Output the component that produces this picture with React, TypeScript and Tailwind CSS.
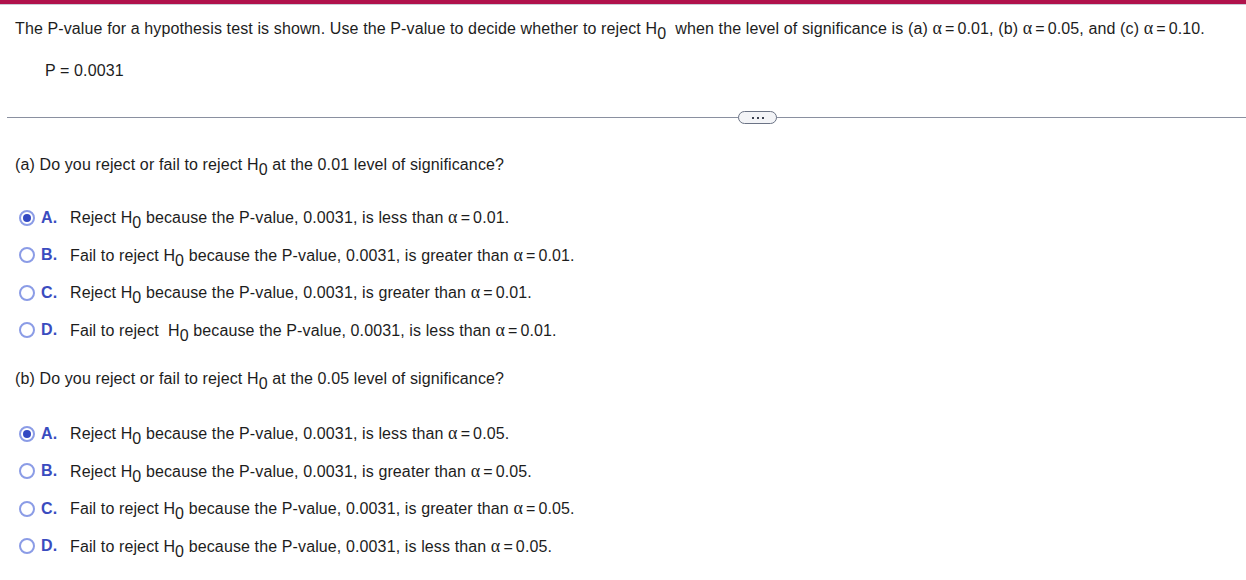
const H0 = () => (
  <span className="whitespace-nowrap">
    H<sub className="relative top-[5px] align-baseline text-[16px] leading-none">0</sub>
  </span>
);

const Alpha = ({ v }: { v: string }) => (
  <span className="whitespace-nowrap">
    <span className="font-['Liberation_Serif',serif] text-[18px]">α</span>
    <span className="mx-[3px]">=</span>
    {v}
  </span>
);

type Opt = { letter: string; before: string; after: React.ReactNode; selected?: boolean };

function Option({ letter, before, after, selected }: Opt) {
  return (
    <div className="flex h-[37.5px] items-center">
      <span className="ml-[19px] flex h-[16px] w-[16px] items-center justify-center rounded-full border-2 border-[#8b9ce6] bg-white">
        {selected && <span className="h-[8px] w-[8px] rounded-full bg-[#3349c2]" />}
      </span>
      <span className="ml-[6px] w-[29px] font-bold text-[#3a4cbf]">{letter}.</span>
      <span>
        {before} <H0 /> {after}
      </span>
    </div>
  );
}

export default function App() {
  return (
    <div className="min-h-screen bg-white font-['Liberation_Sans',Arial,sans-serif] text-[16px] leading-[18px] tracking-[0.12px] text-[#1d1d1d]">
      <div className="h-[4px] bg-[#b0124b]" />
      <div className="h-[1px] bg-[#c9ccd6]" />
      <div className="px-[15px] pt-[14px]">
        The P-value for a hypothesis test is shown. Use the P-value to decide whether to reject <H0 />&nbsp; when the level of
        significance is (a) <Alpha v="0.01" />, (b) <Alpha v="0.05" />, and (c) <Alpha v="0.10" />.
      </div>
      <div className="pl-[45px] pt-[24px]">P = 0.0031</div>
      <div className="relative ml-[7px] mt-[37px] h-[1px] bg-[#8a90a0]">
        <div className="absolute left-[731px] top-[-6px] flex h-[13px] w-[39px] items-center justify-center gap-[3px] rounded-full border border-[#6b7385] bg-[#f3f4f7]">
          <span className="h-[2px] w-[2px] bg-[#3b4150]" />
          <span className="h-[2px] w-[2px] bg-[#3b4150]" />
          <span className="h-[2px] w-[2px] bg-[#3b4150]" />
        </div>
      </div>
      <div className="px-[15px] pt-[38px]">
        (a) Do you reject or fail to reject <H0 /> at the 0.01 level of significance?
      </div>
      <div className="pt-[25px]">
        <Option letter="A" before="Reject" after={<>because the P-value, 0.0031, is less than <Alpha v="0.01" />.</>} selected />
        <Option letter="B" before="Fail to reject" after={<>because the P-value, 0.0031, is greater than <Alpha v="0.01" />.</>} />
        <Option letter="C" before="Reject" after={<>because the P-value, 0.0031, is greater than <Alpha v="0.01" />.</>} />
        <Option letter="D" before={"Fail to reject\u00a0"} after={<>because the P-value, 0.0031, is less than <Alpha v="0.01" />.</>} />
      </div>
      <div className="px-[15px] pt-[21px]">
        (b) Do you reject or fail to reject <H0 /> at the 0.05 level of significance?
      </div>
      <div className="pt-[27px]">
        <Option letter="A" before="Reject" after={<>because the P-value, 0.0031, is less than <Alpha v="0.05" />.</>} selected />
        <Option letter="B" before="Reject" after={<>because the P-value, 0.0031, is greater than <Alpha v="0.05" />.</>} />
        <Option letter="C" before="Fail to reject" after={<>because the P-value, 0.0031, is greater than <Alpha v="0.05" />.</>} />
        <Option letter="D" before="Fail to reject" after={<>because the P-value, 0.0031, is less than <Alpha v="0.05" />.</>} />
      </div>
    </div>
  );
}
